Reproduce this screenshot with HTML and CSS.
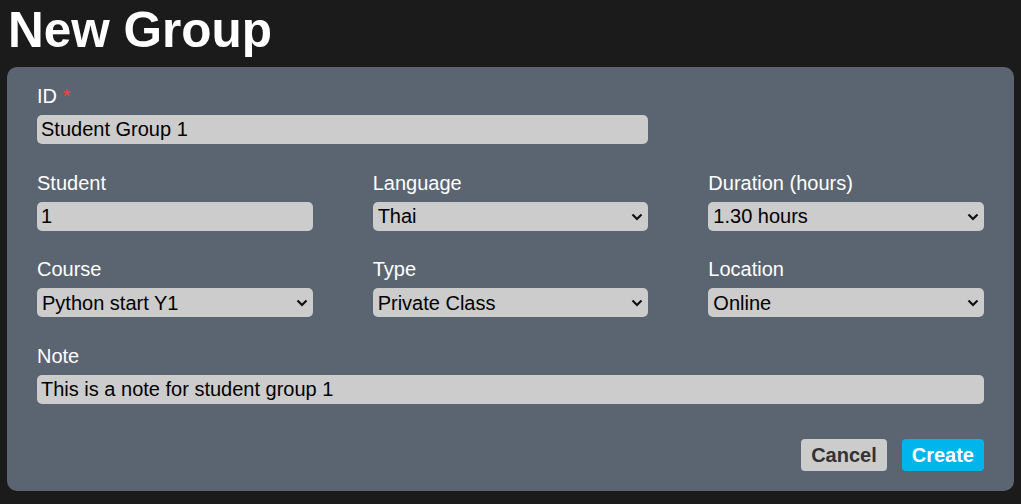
FILE: index.html
```html
<!DOCTYPE html>
<html>
<head>
<meta charset="utf-8">
<link rel="stylesheet" href="styles.css">
</head>
<body>
<h1 class="title">New Group</h1>
<form class="panel">
  <div class="grid">
    <div class="field span2">
      <label class="label">ID <span class="req">*</span></label>
      <input class="input" type="text" value="Student Group 1">
    </div>
    <div class="field"></div>

    <div class="field">
      <label class="label">Student</label>
      <input class="input" type="text" value="1">
    </div>
    <div class="field">
      <label class="label">Language</label>
      <div class="select-wrap">
        <select class="input select"><option>Thai</option></select>
        <svg class="chev" width="12" height="8" viewBox="0 0 12 8"><path d="M1.5 1.5 L6 6 L10.5 1.5" fill="none" stroke="#111" stroke-width="2.2"/></svg>
      </div>
    </div>
    <div class="field">
      <label class="label">Duration (hours)</label>
      <div class="select-wrap">
        <select class="input select"><option>1.30 hours</option></select>
        <svg class="chev" width="12" height="8" viewBox="0 0 12 8"><path d="M1.5 1.5 L6 6 L10.5 1.5" fill="none" stroke="#111" stroke-width="2.2"/></svg>
      </div>
    </div>

    <div class="field">
      <label class="label">Course</label>
      <div class="select-wrap">
        <select class="input select"><option>Python start Y1</option></select>
        <svg class="chev" width="12" height="8" viewBox="0 0 12 8"><path d="M1.5 1.5 L6 6 L10.5 1.5" fill="none" stroke="#111" stroke-width="2.2"/></svg>
      </div>
    </div>
    <div class="field">
      <label class="label">Type</label>
      <div class="select-wrap">
        <select class="input select"><option>Private Class</option></select>
        <svg class="chev" width="12" height="8" viewBox="0 0 12 8"><path d="M1.5 1.5 L6 6 L10.5 1.5" fill="none" stroke="#111" stroke-width="2.2"/></svg>
      </div>
    </div>
    <div class="field">
      <label class="label">Location</label>
      <div class="select-wrap">
        <select class="input select"><option>Online</option></select>
        <svg class="chev" width="12" height="8" viewBox="0 0 12 8"><path d="M1.5 1.5 L6 6 L10.5 1.5" fill="none" stroke="#111" stroke-width="2.2"/></svg>
      </div>
    </div>

    <div class="field span3">
      <label class="label">Note</label>
      <input class="input" type="text" value="This is a note for student group 1">
    </div>
  </div>
  <div class="actions">
    <button type="button" class="btn btn-cancel">Cancel</button>
    <button type="button" class="btn btn-create">Create</button>
  </div>
</form>
</body>
</html>
```
FILE: styles.css
```css
html, body {
  margin: 0;
  padding: 0;
  background: #1b1b1b;
}
body {
  padding: 0 7px;
  font-family: "Liberation Sans", Arial, sans-serif;
}
.title {
  margin: 0;
  padding: 2px 0 0 1px;
  height: 65px;
  font-size: 49.5px;
  line-height: 56px;
  font-weight: bold;
  color: #ffffff;
}
.panel {
  background: #5a6571;
  border-radius: 10px;
  padding: 18px 30px 20px 30px;
  width: 1007px;
  box-sizing: border-box;
}
.grid {
  display: grid;
  grid-template-columns: 1fr 1fr 1fr;
  column-gap: 60px;
  row-gap: 27.7px;
}
.field {
  display: flex;
  flex-direction: column;
}
.span2 { grid-column: span 2; }
.span3 { grid-column: span 3; }
.label {
  color: #ffffff;
  font-size: 20px;
  line-height: 23px;
  margin-bottom: 7px;
}
.req { color: #ff3b3b; }
.input {
  font-family: "Liberation Sans", Arial, sans-serif;
  font-size: 20px;
  color: #000;
  background: #cccccc;
  border: none;
  border-radius: 5px;
  height: 29px;
  padding: 0 4px;
  box-sizing: border-box;
  width: 100%;
  outline: none;
  margin: 0;
}
.select-wrap {
  position: relative;
}
.select {
  appearance: none;
  -webkit-appearance: none;
  display: block;
  padding-left: 5px;
}
.chev {
  position: absolute;
  right: 5px;
  top: 11px;
  pointer-events: none;
}
.actions {
  display: flex;
  justify-content: flex-end;
  gap: 15px;
  margin-top: 35px;
}
.btn {
  font-family: "Liberation Sans", Arial, sans-serif;
  font-weight: bold;
  font-size: 20px;
  height: 32px;
  border: none;
  border-radius: 4px;
  padding: 0 10px;
  cursor: pointer;
}
.btn-cancel {
  background: #cccccc;
  color: #333333;
}
.btn-create {
  background: #00b4ec;
  color: #ffffff;
}
```
